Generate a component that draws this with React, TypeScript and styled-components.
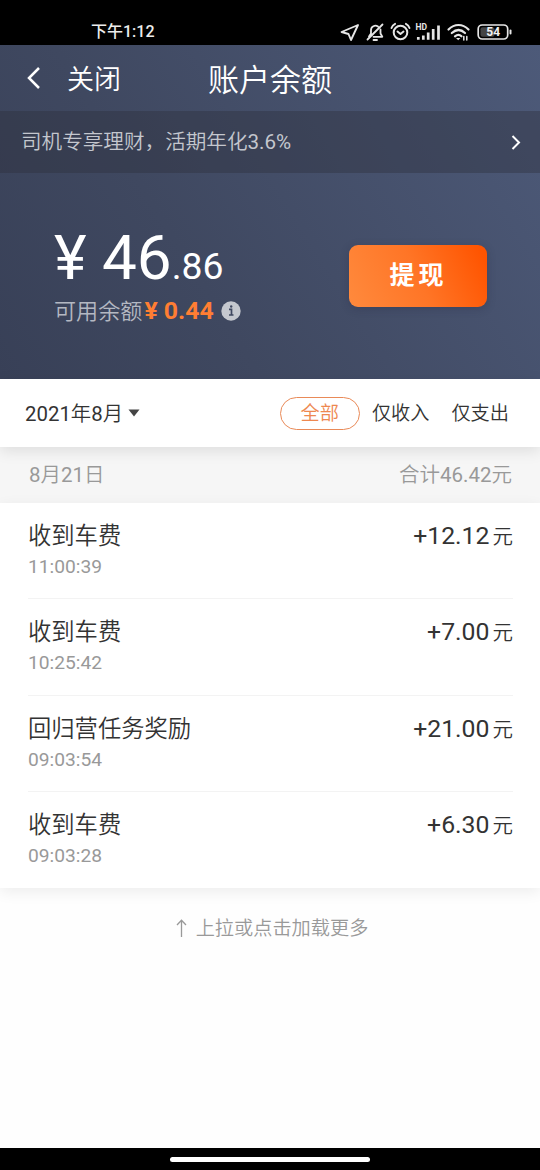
import React from "react";
import styled, { createGlobalStyle } from "styled-components";

const GlobalStyle = createGlobalStyle`
  * { box-sizing: border-box; }
  body {
    margin: 0;
    background: #fff;
    font-family: Roboto, "Noto Sans CJK SC DemiLight", "Noto Sans CJK SC", sans-serif;
  }
`;

const Screen = styled.div`
  display: flex;
  flex-direction: column;
  width: 540px;
  height: 1170px;
  overflow: hidden;
  background: #fefefe;
  color: #333;
  white-space: nowrap;
`;

const StatusBar = styled.header`
  display: flex;
  align-items: center;
  justify-content: space-between;
  height: 45px;
  flex: none;
  padding: 18px 28px 0 91px;
  background: #000;
  color: #ececec;
`;

const Clock = styled.span`
  font-family: Roboto, "Noto Sans CJK SC", sans-serif;
  font-size: 16px;
  line-height: 20px;
  font-weight: 500;
`;

const StatusIcons = styled.svg`
  display: block;
  flex: none;
`;

const Hero = styled.section`
  height: 334px;
  flex: none;
  background: linear-gradient(58deg, #384057 0%, #3f4860 35%, #4d5a79 100%);
  color: #fff;
`;

const NavBar = styled.nav`
  display: grid;
  grid-template-columns: 40px 141px 1fr;
  align-items: center;
  height: 66px;
  padding: 0 0 0 27px;
`;

const CloseLabel = styled.span`
  padding-top: 4px;
  font-size: 27px;
  line-height: 36px;
`;

const Title = styled.h1`
  margin: 0;
  padding-top: 5px;
  font-size: 31px;
  line-height: 40px;
  font-weight: 400;
`;

const PromoBar = styled.div`
  display: flex;
  align-items: center;
  justify-content: space-between;
  height: 62px;
  padding: 0 19px 0 21px;
  background: rgba(46, 48, 61, 0.4);
  color: #c4c7ce;
`;

const PromoText = styled.span`
  padding-bottom: 5px;
  font-size: 20.6px;
`;

const Balance = styled.div`
  display: flex;
  justify-content: space-between;
  height: 206px;
  padding: 48px 53px 0 54px;
`;

const BalanceInfo = styled.div`
  display: flex;
  flex-direction: column;
`;

const Amount = styled.div`
  height: 74px;
  font-size: 62px;
  line-height: 74px;
`;

const Cents = styled.span`
  font-size: 37.3px;
`;

const Available = styled.div`
  display: flex;
  align-items: center;
  height: 32px;
  color: #b4b8c2;
  font-size: 22.1px;
  line-height: 32px;
`;

const AvailableAmount = styled.b`
  margin: 0 7px 0 2px;
  color: #ff7e33;
  font-size: 24.8px;
  font-weight: 700;
`;

const WithdrawButton = styled.button`
  width: 138px;
  height: 62px;
  margin-top: 24px;
  padding: 0 0 6px 1px;
  border: 0;
  border-radius: 9px;
  background: linear-gradient(65deg, #ff8a3d 0%, #ff7526 50%, #ff5400 95%);
  box-shadow: 0 2px 8px rgba(40, 40, 65, 0.3);
  color: #fff;
  font-family: Roboto, "Noto Sans CJK SC", sans-serif;
  font-size: 25px;
  font-weight: 700;
  letter-spacing: 4px;
`;

const FilterBar = styled.div`
  position: relative;
  display: flex;
  align-items: center;
  justify-content: space-between;
  height: 68px;
  flex: none;
  padding: 0 31px 0 25px;
  background: #fff;
  box-shadow: 0 4px 14px rgba(0, 0, 0, 0.1);
`;

const MonthPicker = styled.div`
  display: flex;
  align-items: center;
  gap: 5px;
  font-size: 20.4px;
`;

const MonthLabel = styled.span`
  padding-bottom: 2px;
`;

const Filters = styled.div`
  display: flex;
  align-items: center;
  font-size: 19.2px;
`;

const Filter = styled.span<{ $active?: boolean }>`
  height: 33px;
  line-height: ${(p) => (p.$active ? 32 : 34)}px;
  margin-left: ${(p) => (p.$active ? 0 : 22)}px;
  padding: 0 ${(p) => (p.$active ? 20 : 0)}px;
  border: ${(p) => (p.$active ? "1px solid #e98a58" : "0")};
  border-radius: 17px;
  color: ${(p) => (p.$active ? "#ee8850" : "#333")};

  &:nth-child(2) { margin-left: 12px; }
`;

const DayHeader = styled.div`
  display: flex;
  align-items: center;
  justify-content: space-between;
  height: 56px;
  flex: none;
  padding: 0 28px 4px 29px;
  background: #f6f6f6;
  color: #999;
  font-size: 20.5px;
`;

const Records = styled.ul`
  height: 385px;
  flex: none;
  margin: 0;
  padding: 0 27px 0 28px;
  list-style: none;
  background: #fff;
  box-shadow: 0 4px 14px rgba(0, 0, 0, 0.07);
`;

const Record = styled.li`
  display: flex;
  justify-content: space-between;
  height: 96.3px;
  padding-top: 16px;
  border-bottom: 1px solid #f3f3f3;

  &:last-child { border-bottom: 0; }
`;

const RecordName = styled.div`
  font-size: 23.3px;
  line-height: 35px;
`;

const RecordTime = styled.div`
  color: #999;
  font-size: 19.2px;
  line-height: 26px;
`;

const RecordAmount = styled.div`
  font-size: 24.8px;
  line-height: 34px;
`;

const Unit = styled.span`
  margin-left: 3px;
  font-size: 20.5px;
`;

const LoadMore = styled.div`
  display: flex;
  flex: 1;
  justify-content: center;
  padding: 26px 0 0 4px;
  color: #999;
  font-size: 19.2px;
  line-height: 30px;
`;

const ArrowUp = styled.svg`
  flex: none;
  margin: 5px 9px 0 0;
`;

const HomeBar = styled.footer`
  display: flex;
  justify-content: center;
  height: 22px;
  flex: none;
  padding-top: 9px;
  background: #000;
`;

const HomeHandle = styled.div`
  width: 200px;
  height: 5px;
  border-radius: 3px;
  background: #fff;
`;

const records = [
  { name: "收到车费", time: "11:00:39", amount: "+12.12" },
  { name: "收到车费", time: "10:25:42", amount: "+7.00" },
  { name: "回归营任务奖励", time: "09:03:54", amount: "+21.00" },
  { name: "收到车费", time: "09:03:28", amount: "+6.30" },
];

function Status() {
  return (
    <StatusIcons width="174" height="22" viewBox="338 20 174 22" fill="none" stroke="#e6e6e6" strokeWidth="1.7" strokeLinecap="round" strokeLinejoin="round">
      <path d="M358 24 341.500 31 348.500 33 351 39Z" strokeWidth="1.9" />
      <path d="M369 35.500l2-3v-3.500c0-3.500 4-5.500 7-3.500M380.500 28.500v4l1.800 3.300H373.500M382.500 23.500 367.500 38.500M373.500 39h3.500" strokeWidth="1.800" />
      <circle cx="400.500" cy="31.500" r="6.800" strokeWidth="2" />
      <path d="M397.500 30.500l3 2.500 3-2.500M391.500 27c.6-2 1.800-3.300 3.600-4.200M409.500 27c-.6-2-1.800-3.300-3.600-4.200" strokeWidth="1.900" />
      <path d="M418.300 36v2.700M423.300 34.500v4.200M428.200 31.500v7.200M433.200 28v10.700M438.500 24.500v14.200" strokeWidth="2.700" strokeLinecap="butt" />
      <text x="415.500" y="28.500" fill="#e6e6e6" stroke="none" fontSize="8.500" fontWeight="700">HD</text>
      <path d="M448.500 28.500c6-6 14-6 20 0M451.800 32c4.300-3.800 9.200-3.800 13.200 0M455 35.300c2.200-1.900 4.600-1.900 6.500 0" strokeWidth="2.200" />
      <path d="M456 37l2.200 2.200 2.200-2.200Z" fill="#e6e6e6" stroke="none" />
      <path d="M463.800 39v-3.500M466.800 35.500v3.500" strokeWidth="1.500" />
      <rect x="478.200" y="24" width="29.500" height="14" rx="4" />
      <rect x="480.500" y="26.300" width="14" height="9.500" rx="2" fill="#444" stroke="none" />
      <path d="M510.500 29.500v3" strokeWidth="2" />
      <text x="493.200" y="35.300" textAnchor="middle" fill="#f2f2f2" stroke="none" fontSize="12" fontWeight="700">54</text>
    </StatusIcons>
  );
}

export default function App() {
  return (
    <Screen>
      <GlobalStyle />
      <StatusBar>
        <Clock>下午1:12</Clock>
        <Status />
      </StatusBar>
      <Hero>
        <NavBar>
          <svg width="14" height="22" viewBox="0 0 14 22" fill="none" stroke="#fff" strokeWidth="2.500">
            <path d="M12 1 2 11 12 21" />
          </svg>
          <CloseLabel>关闭</CloseLabel>
          <Title>账户余额</Title>
        </NavBar>
        <PromoBar>
          <PromoText>司机专享理财，活期年化3.6%</PromoText>
          <svg width="10" height="15" viewBox="0 0 10 15" fill="none" stroke="#fff" strokeWidth="2">
            <path d="M1.500 1 8 7.500 1.500 14" />
          </svg>
        </PromoBar>
        <Balance>
          <BalanceInfo>
            <Amount>¥ 46<Cents>.86</Cents></Amount>
            <Available>
              可用余额
              <AvailableAmount>¥ 0.44</AvailableAmount>
              <svg width="20" height="20" viewBox="0 0 20 20">
                <circle cx="10" cy="10" r="9.700" fill="#c5c8cf" />
                <path d="M8 8.300h2.500v5.200M8 14h4.500" fill="none" stroke="#3f4860" strokeWidth="1.700" />
                <circle cx="10.200" cy="5.500" r="1.200" fill="#3f4860" />
              </svg>
            </Available>
          </BalanceInfo>
          <WithdrawButton>提现</WithdrawButton>
        </Balance>
      </Hero>
      <FilterBar>
        <MonthPicker>
          <MonthLabel>2021年8月</MonthLabel>
          <svg width="12" height="8" viewBox="0 0 12 8">
            <path d="M.5.500h11L6 7.500Z" fill="#444" />
          </svg>
        </MonthPicker>
        <Filters>
          <Filter $active>全部</Filter>
          <Filter>仅收入</Filter>
          <Filter>仅支出</Filter>
        </Filters>
      </FilterBar>
      <DayHeader>
        <span>8月21日</span>
        <span>合计46.42元</span>
      </DayHeader>
      <Records>
        {records.map((r) => (
          <Record key={r.time}>
            <div>
              <RecordName>{r.name}</RecordName>
              <RecordTime>{r.time}</RecordTime>
            </div>
            <RecordAmount>
              {r.amount}
              <Unit>元</Unit>
            </RecordAmount>
          </Record>
        ))}
      </Records>
      <LoadMore>
        <ArrowUp width="11" height="18" viewBox="0 0 11 18" fill="none" stroke="#999" strokeWidth="1.300">
          <path d="M5.500 18V1.500M1 6 5.500 1.300 10 6" />
        </ArrowUp>
        <span>上拉或点击加载更多</span>
      </LoadMore>
      <HomeBar>
        <HomeHandle />
      </HomeBar>
    </Screen>
  );
}
